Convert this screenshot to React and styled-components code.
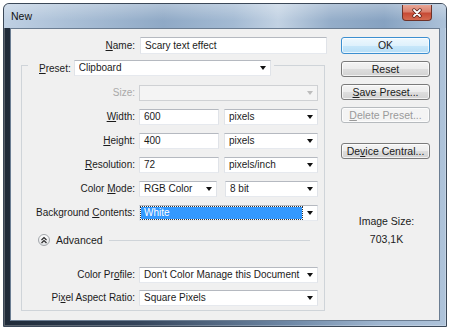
import React from "react";
import styled, { createGlobalStyle } from "styled-components";

const GlobalStyle = createGlobalStyle`
  html, body { margin: 0; padding: 0; background: #fff; }
  body {
    font-family: "Liberation Sans", Arial, sans-serif;
    font-size: 10px;
    color: #1b1b1b;
  }
  * { box-sizing: border-box; }
`;

const Window = styled.div`
  margin: 3px 0 0 3px;
  width: 444px;
  height: 324px;
  border: 1px solid #3b4858;
  border-radius: 6px 6px 0 0;
  background: linear-gradient(90deg, #1f2b39 0%, #34445a 30%, #6f89a7 65%, #9fb6d0 85%, #aec3da 100%);
  box-shadow: inset 0 0 0 1px rgba(255, 255, 255, 0.25);
  display: flex;
  flex-direction: column;
  overflow: hidden;
`;

const TitleBar = styled.div`
  height: 24px;
  flex: none;
  display: flex;
  align-items: flex-start;
  justify-content: space-between;
  padding-left: 7px;
  background:
    linear-gradient(180deg, rgba(255, 255, 255, 0.3), rgba(255, 255, 255, 0) 70%),
    linear-gradient(90deg, #bfd0e3 0%, #abc0d7 14%, #8fa9c6 36%, #a3bad3 52%, #c2d2e3 62%, #94adc9 74%, #86a2c1 86%, #adc2d9 100%);
`;

const Title = styled.span`
  line-height: 24px;
  font-size: 10.5px;
  color: #111;
`;

const CloseButton = styled.div`
  width: 30px;
  height: 16px;
  margin: 1px 14px 0 0;
  border: 1px solid #6e3228;
  border-top: none;
  border-radius: 0 0 4px 4px;
  background: linear-gradient(180deg, #e9a797 0%, #d9806d 45%, #c74a35 55%, #d46a4f 100%);
  display: flex;
  align-items: center;
  justify-content: center;
`;

const Client = styled.div`
  flex: 1;
  margin: 0 6px 5px 6px;
  background: #f0f0f0;
  border: 1px solid #6b7d92;
  display: flex;
  padding-top: 8px;
`;

const LeftColumn = styled.div`
  width: 320px;
  display: flex;
  flex-direction: column;
`;

const NameRow = styled.div`
  display: flex;
  align-items: center;
  gap: 5px;
`;

const Label = styled.span`
  width: ${p => p.width || 113}px;
  text-align: right;
  line-height: 16px;
  white-space: nowrap;
  color: ${p => (p.disabled ? "#a9a9a9" : "#1b1b1b")};
`;

const Key = styled.span`
  text-decoration: underline;
  text-underline-offset: 1px;
`;

const TextBox = styled.div`
  width: ${p => p.width}px;
  height: ${p => p.height || 16}px;
  background: #fff;
  border: 1px solid;
  border-color: #b5b9c0 #e0e3e8 #e6e9ee #e0e3e8;
  padding-left: 4px;
  line-height: ${p => (p.height || 16) - 2}px;
  white-space: nowrap;
  overflow: hidden;
`;

const ComboBox = styled.div`
  width: ${p => p.width}px;
  height: 16px;
  background: ${p => (p.disabled ? "#f4f4f4" : "#fff")};
  border: 1px solid;
  border-color: ${p => (p.disabled ? "#cfd1d4" : "#b5b9c0 #e0e3e8 #e6e9ee #e0e3e8")};
  padding-left: 4px;
  display: flex;
  align-items: center;
  line-height: 14px;
  white-space: nowrap;
`;

const ComboText = styled.span`
  flex: 1;
  overflow: hidden;
`;

const Selection = styled.span`
  flex: 1;
  align-self: stretch;
  margin: 1px 1px 1px -3px;
  padding-left: 3px;
  background: #3399ff;
  color: #fff;
  outline: 1px dotted #333;
  line-height: 12px;
`;

const Arrow = styled.span`
  flex: none;
  width: 0;
  height: 0;
  margin: 0 4px 0 4px;
  border-left: 3.5px solid transparent;
  border-right: 3.5px solid transparent;
  border-top: 4px solid ${p => (p.disabled ? "#bdbdbd" : "#111")};
`;

const GroupBox = styled.fieldset`
  margin: 0 0 0 10px;
  padding: 0 0 4px 0;
  width: 304px;
  min-inline-size: 0;
  border: 1px solid #cfd4d9;
`;

const GroupHeader = styled.legend`
  margin-left: 6px;
  padding: 6px 3px 0 11px;
  display: flex;
  align-items: center;
  gap: 3px;
`;

const Rows = styled.div`
  display: flex;
  flex-direction: column;
  gap: ${p => p.gap}px;
  padding-top: ${p => p.top}px;
`;

const Row = styled.div`
  display: flex;
  align-items: center;
  gap: 4px;
`;

const Pair = styled.div`
  display: flex;
  gap: ${p => p.gap}px;
`;

const AdvancedRow = styled.div`
  display: flex;
  align-items: center;
  height: 14px;
  margin-top: 12px;
  padding-left: 16px;
`;

const ToggleCircle = styled.span`
  width: 12px;
  height: 12px;
  border-radius: 50%;
  border: 1px solid #a2a6ab;
  background: linear-gradient(180deg, #fdfdfd, #e1e3e6);
  display: flex;
  align-items: center;
  justify-content: center;
`;

const AdvancedText = styled.span`
  margin-left: 6px;
  font-size: 10.5px;
`;

const Rule = styled.span`
  flex: 1;
  height: 1px;
  margin: 1px 14px 0 6px;
  background: #cfd4d9;
`;

const RightColumn = styled.div`
  padding-left: 10px;
  width: 99px;
  display: flex;
  flex-direction: column;
  align-items: stretch;
`;

const Buttons = styled.div`
  display: flex;
  flex-direction: column;
  gap: 7px;
`;

const Button = styled.div`
  height: ${p => (p.primary ? 17 : 16)}px;
  border: 1px solid ${p => (p.primary ? "#3c8fd0" : p.disabled ? "#b6babe" : "#7a7a7a")};
  border-radius: 3px;
  background: ${p =>
    p.primary
      ? "linear-gradient(180deg, #eef8fe 0%, #dff1fc 50%, #c8e7fa 51%, #b7def6 100%)"
      : p.disabled
      ? "#f4f4f4"
      : "linear-gradient(180deg, #f4f4f4 0%, #ececec 50%, #dedede 51%, #d2d2d2 100%)"};
  box-shadow: inset 0 0 0 1px rgba(255, 255, 255, 0.7);
  color: ${p => (p.disabled ? "#9a9a9a" : "#1b1b1b")};
  text-align: center;
  line-height: ${p => (p.primary ? 15 : 14)}px;
  font-size: 10.5px;
  margin-top: ${p => p.gapTop || 0}px;
`;

const SizeInfo = styled.div`
  margin-top: 56px;
  display: flex;
  flex-direction: column;
  align-items: center;
  gap: 6px;
  font-size: 10.5px;
  line-height: 12px;
  padding-left: 2px;
`;

const CloseGlyph = () => (
  <svg width="12" height="10" viewBox="0 0 12 10">
    <path d="M3 2 L9 8 M9 2 L3 8" stroke="#5a2219" strokeWidth="3.4" strokeLinecap="round" />
    <path d="M3 2 L9 8 M9 2 L3 8" stroke="#fff" strokeWidth="1.8" strokeLinecap="round" />
  </svg>
);

const ChevronsUp = () => (
  <svg width="8" height="8" viewBox="0 0 8 8">
    <path d="M1.5 4 L4 1.5 L6.5 4 M1.5 7 L4 4.5 L6.5 7" fill="none" stroke="#2a2a2a" strokeWidth="1.2" />
  </svg>
);

const FieldRow = ({ label, disabled, children }) => (
  <Row>
    <Label disabled={disabled}>{label}</Label>
    {children}
  </Row>
);

const Combo = ({ width, value, disabled }) => (
  <ComboBox width={width} disabled={disabled}>
    <ComboText>{value}</ComboText>
    <Arrow disabled={disabled} />
  </ComboBox>
);

export default function App() {
  return (
    <>
      <GlobalStyle />
      <Window>
        <TitleBar>
          <Title>New</Title>
          <CloseButton>
            <CloseGlyph />
          </CloseButton>
        </TitleBar>
        <Client>
          <LeftColumn>
            <NameRow>
              <Label width={124}>
                <Key>N</Key>ame:
              </Label>
              <TextBox width={187} height={17}>Scary text effect</TextBox>
            </NameRow>

            <GroupBox>
              <GroupHeader>
                <span>
                  <Key>P</Key>reset:
                </span>
                <Combo width={197} value="Clipboard" />
              </GroupHeader>

              <Rows gap={8} top={9}>
                <FieldRow label="Size:" disabled>
                  <Combo width={179} value="" disabled />
                </FieldRow>
                <FieldRow label={<><Key>W</Key>idth:</>}>
                  <Pair gap={5}>
                    <TextBox width={80}>600</TextBox>
                    <Combo width={94} value="pixels" />
                  </Pair>
                </FieldRow>
                <FieldRow label={<><Key>H</Key>eight:</>}>
                  <Pair gap={5}>
                    <TextBox width={80}>400</TextBox>
                    <Combo width={94} value="pixels" />
                  </Pair>
                </FieldRow>
                <FieldRow label={<><Key>R</Key>esolution:</>}>
                  <Pair gap={5}>
                    <TextBox width={80}>72</TextBox>
                    <Combo width={94} value="pixels/inch" />
                  </Pair>
                </FieldRow>
                <FieldRow label={<>Color <Key>M</Key>ode:</>}>
                  <Pair gap={8}>
                    <Combo width={78} value="RGB Color" />
                    <Combo width={93} value="8 bit" />
                  </Pair>
                </FieldRow>
                <FieldRow label={<>Background <Key>C</Key>ontents:</>}>
                  <ComboBox width={179}>
                    <Selection>White</Selection>
                    <Arrow />
                  </ComboBox>
                </FieldRow>
              </Rows>

              <AdvancedRow>
                <ToggleCircle>
                  <ChevronsUp />
                </ToggleCircle>
                <AdvancedText>Advanced</AdvancedText>
                <Rule />
              </AdvancedRow>

              <Rows gap={7} top={20}>
                <FieldRow label={<>Color Pr<Key>o</Key>file:</>}>
                  <Combo width={179} value="Don't Color Manage this Document" />
                </FieldRow>
                <FieldRow label={<>Pi<Key>x</Key>el Aspect Ratio:</>}>
                  <Combo width={179} value="Square Pixels" />
                </FieldRow>
              </Rows>
            </GroupBox>
          </LeftColumn>

          <RightColumn>
            <Buttons>
              <Button primary>OK</Button>
              <Button>Reset</Button>
              <Button>
                <Key>S</Key>ave Preset...
              </Button>
              <Button disabled>
                <Key>D</Key>elete Preset...
              </Button>
              <Button gapTop={13}>
                De<Key>v</Key>ice Central...
              </Button>
            </Buttons>
            <SizeInfo>
              <span>Image Size:</span>
              <span>703,1K</span>
            </SizeInfo>
          </RightColumn>
        </Client>
      </Window>
    </>
  );
}
